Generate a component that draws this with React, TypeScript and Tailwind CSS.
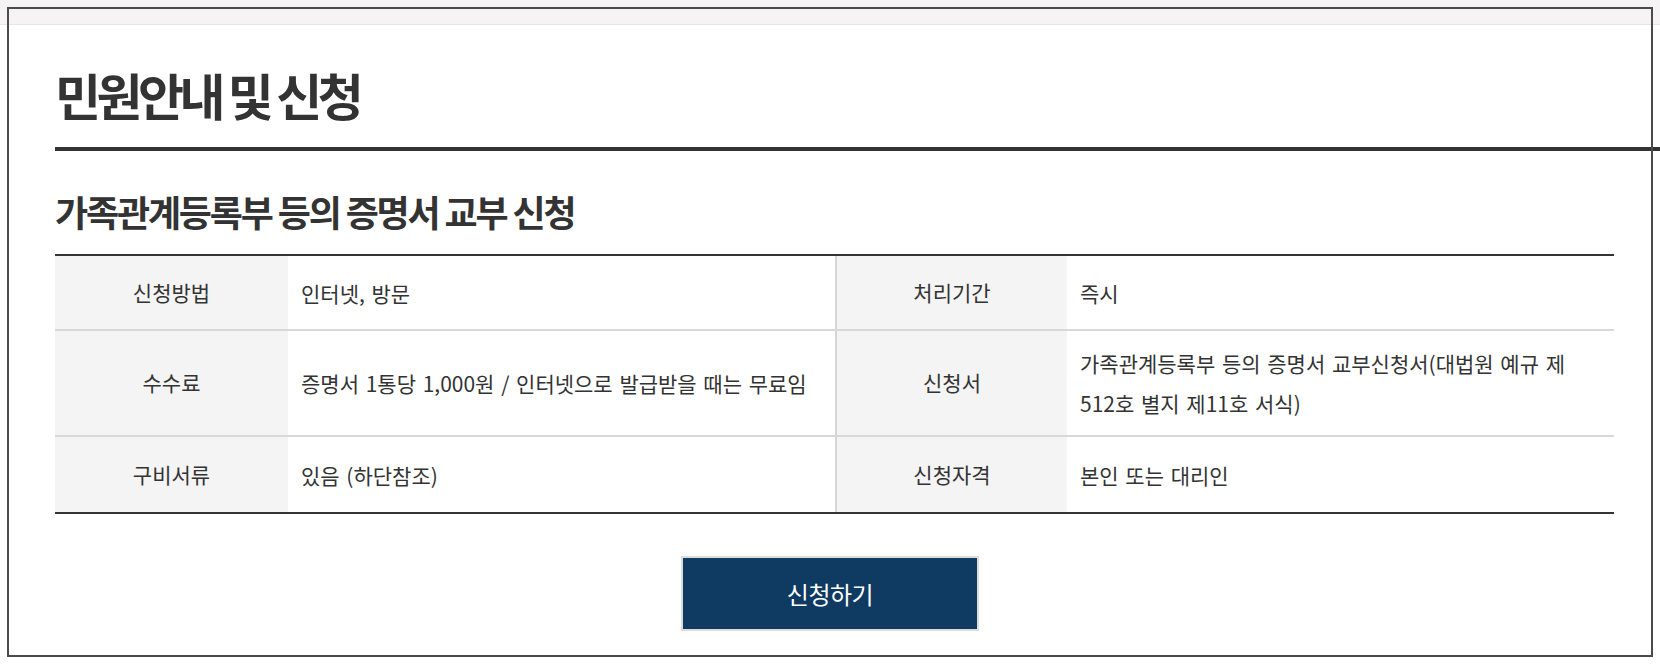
import React from "react";

const rows = [
  [
    { label: "신청방법", value: "인터넷, 방문" },
    { label: "처리기간", value: "즉시" },
  ],
  [
    { label: "수수료", value: "증명서 1통당 1,000원 / 인터넷으로 발급받을 때는 무료임" },
    { label: "신청서", value: "가족관계등록부 등의 증명서 교부신청서(대법원 예규 제\n512호 별지 제11호 서식)" },
  ],
  [
    { label: "구비서류", value: "있음 (하단참조)" },
    { label: "신청자격", value: "본인 또는 대리인" },
  ],
];

export default function App() {
  return (
    <div className="relative w-full h-[664px] bg-white overflow-hidden text-[#333] font-['Noto_Sans_CJK_KR','Noto_Sans',sans-serif]">
      {/* top gray band */}
      <div className="h-[25px] bg-[#f5f3f4] border-b border-[#e6e4e5]" />

      <div className="pl-[55px]">
        <div className="pt-[41px] pb-[25px] border-b-4 border-[#333]">
          <h1 className="text-[50px] leading-[56px] font-bold tracking-[-0.09em]">민원안내 및 신청</h1>
        </div>

        <h2 className="mt-[38px] text-[36px] leading-[44px] font-bold tracking-[-0.06em]">
          가족관계등록부 등의 증명서 교부 신청
        </h2>

        <div className="mt-[21px] w-[1559px] border-t-2 border-b-2 border-[#333] text-[21px] [word-spacing:2px]">
          {rows.map((row, idx) => (
            <div
              key={idx}
              className={`grid grid-cols-[233px_547px_232px_1fr] min-h-[75px] ${idx < rows.length - 1 ? "border-b-2 border-[#d8d8d8]" : ""}`}
            >
              {row.map((cell, i) => (
                <React.Fragment key={i}>
                  <div
                    className={`flex items-center justify-center bg-[#f4f4f4] ${i === 1 ? "border-l-2 border-[#d6d6d6]" : ""}`}
                  >
                    {cell.label}
                  </div>
                  <div className="flex items-center px-[13px] py-[12px] leading-[40px]">
                    <span className="whitespace-pre-line">{cell.value}</span>
                  </div>
                </React.Fragment>
              ))}
            </div>
          ))}
        </div>
      </div>

      <div className="mt-[42px] flex justify-center">
        <button className="w-[298px] h-[75px] border-2 border-[#dcdcdc] bg-[#0f3a62] text-white text-[24px] tracking-[-0.02em]">
          신청하기
        </button>
      </div>

      {/* outline frame over the page */}
      <div className="absolute left-[7px] top-[7px] w-[1646px] h-[650px] border-2 border-[#4b4b4b] pointer-events-none" />
    </div>
  );
}
